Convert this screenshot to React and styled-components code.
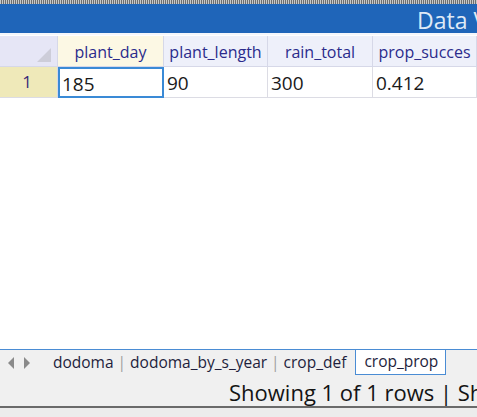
import React from 'react';
import styled, { createGlobalStyle } from 'styled-components';

// Глобальные стили страницы
const GlobalStyle = createGlobalStyle`
  html, body {
    margin: 0;
    padding: 0;
    background: #ffffff;
    overflow: hidden;
  }
  body {
    font-family: "Open Sans", "Liberation Sans", sans-serif;
  }
`;

const Frame = styled.div`
  width: 477px;
  height: 417px;
  display: flex;
  flex-direction: column;
  background: #ffffff;
  overflow: hidden;
`;

const DottedStrip = styled.div`
  height: 4px;
  flex-shrink: 0;
  background-color: #8a8a8a;
  background-image: repeating-linear-gradient(
    90deg,
    #c8c8c8 0px,
    #c8c8c8 1px,
    #6e6e6e 1px,
    #6e6e6e 2px
  );
`;

const TitleBar = styled.div`
  height: 29px;
  flex-shrink: 0;
  background: #1f65b9;
  display: flex;
  align-items: center;
  padding-left: 417px;
  overflow: hidden;
  border-bottom: 2px solid #f4f6fb;
`;

const TitleText = styled.div`
  font-family: "Open Sans", "Liberation Sans", sans-serif;
  font-size: 23px;
  color: #dfe9f6;
  white-space: nowrap;
  margin-top: 2px;
`;

const Grid = styled.div`
  display: grid;
  grid-template-columns: 58px 106px 104px 105px 104px;
  flex-shrink: 0;
  padding-top: 1px;
`;

const CornerCell = styled.div`
  height: 31px;
  background: #e6e6f6;
  border-right: 1px solid #d6d8e8;
  border-bottom: 1px solid #d6d8e8;
  position: relative;
  box-sizing: border-box;
`;

const Corner = styled.div`
  position: absolute;
  right: 6px;
  bottom: 4px;
  width: 0;
  height: 0;
  border-left: 14px solid transparent;
  border-bottom: 14px solid #cdcdd9;
`;

const HeadCell = styled.div`
  height: 31px;
  box-sizing: border-box;
  background: ${(p) => (p.$active ? '#fcf8e4' : '#eef0fa')};
  border-right: 1px solid #d6d8e8;
  border-bottom: 1px solid #d6d8e8;
  display: flex;
  align-items: center;
  justify-content: center;
  font-size: 16px;
  color: #2b2b8c;
  white-space: nowrap;
  overflow: hidden;
  padding-top: 2px;
`;

const RowNumber = styled.div`
  height: 31px;
  box-sizing: border-box;
  background: #efe9b9;
  border-right: 1px solid #d6d8e8;
  border-bottom: 1px solid #dcdce4;
  display: flex;
  align-items: center;
  justify-content: flex-end;
  padding-right: 25px;
  padding-bottom: 2px;
  font-size: 17px;
  color: #3a2a78;
`;

const DataCell = styled.div`
  height: 31px;
  box-sizing: border-box;
  background: #ffffff;
  border-right: 1px solid #dcdce4;
  border-bottom: 1px solid #dcdce4;
  display: flex;
  align-items: center;
  padding-left: 3px;
  padding-top: 2px;
  font-family: "Open Sans", "Liberation Sans", sans-serif;
  font-size: 19px;
  color: #1a1a1a;
  white-space: nowrap;
  overflow: hidden;
  ${(p) =>
    p.$selected &&
    `
    border: 2px solid #3a8ad6;
    padding-left: 2px;
  `}
`;

const Spacer = styled.div`
  flex: 1;
  background: #ffffff;
`;

const TabStrip = styled.div`
  height: 26px;
  flex-shrink: 0;
  background: #f0f0f0;
  border-top: 1px solid #4a8cd4;
  display: flex;
  align-items: stretch;
  box-sizing: border-box;
`;

const Arrows = styled.div`
  display: flex;
  align-items: center;
  gap: 10px;
  padding-left: 8px;
  width: 49px;
  box-sizing: border-box;
`;

const Arrow = styled.div`
  width: 0;
  height: 0;
  border-top: 6px solid transparent;
  border-bottom: 6px solid transparent;
  ${(p) =>
    p.$left
      ? 'border-right: 6px solid #8a8a8a;'
      : 'border-left: 6px solid #8a8a8a;'}
`;

const Tab = styled.div`
  display: flex;
  align-items: center;
  padding: 0 4px 2px;
  font-size: 15.5px;
  color: #1e1e3c;
  white-space: nowrap;
  box-sizing: border-box;
  ${(p) =>
    p.$active &&
    `
    background: #ffffff;
    border-left: 1px solid #4a8cd4;
    border-right: 1px solid #4a8cd4;
    border-bottom: 1px solid #4a8cd4;
    padding: 0 7px 2px 8px;
    margin-left: 5px;
  `}
`;

const Sep = styled.span`
  display: flex;
  align-items: center;
  color: #a0a0a0;
  font-size: 15.5px;
  padding-bottom: 2px;
`;

const StatusBar = styled.div`
  height: 33px;
  flex-shrink: 0;
  background: #f0f0f0;
  display: flex;
  align-items: center;
  padding-left: 229px;
  padding-top: 3px;
  box-sizing: border-box;
  font-family: "Open Sans", "Liberation Sans", sans-serif;
  font-size: 22px;
  color: #141414;
  white-space: nowrap;
  overflow: hidden;
  border-bottom: 2px solid #6a6a6a;
`;

const BottomEdge = styled.div`
  height: 9px;
  flex-shrink: 0;
  background: #ececec;
`;

const columns = ['plant_day', 'plant_length', 'rain_total', 'prop_succes'];
const row = ['185', '90', '300', '0.412'];
const tabs = ['dodoma', 'dodoma_by_s_year', 'crop_def'];

const App = () => {
    return (
        <>
            <GlobalStyle />
            <Frame>
                <DottedStrip />
                <TitleBar>
                    <TitleText>Data View</TitleText>
                </TitleBar>
                <Grid>
                    <CornerCell>
                        <Corner />
                    </CornerCell>
                    {columns.map((c, i) => (
                        <HeadCell key={c} $active={i === 0}>
                            {c}
                        </HeadCell>
                    ))}
                    <RowNumber>1</RowNumber>
                    {row.map((v, i) => (
                        <DataCell key={i} $selected={i === 0}>
                            {v}
                        </DataCell>
                    ))}
                </Grid>
                <Spacer />
                <TabStrip>
                    <Arrows>
                        <Arrow $left />
                        <Arrow />
                    </Arrows>
                    {tabs.map((t, i) => (
                        <React.Fragment key={t}>
                            {i > 0 && <Sep>|</Sep>}
                            <Tab>{t}</Tab>
                        </React.Fragment>
                    ))}
                    <Tab $active>crop_prop</Tab>
                </TabStrip>
                <StatusBar>Showing 1 of 1 rows | Showing 4 of 4 columns</StatusBar>
                <BottomEdge />
            </Frame>
        </>
    );
};

export default App;
